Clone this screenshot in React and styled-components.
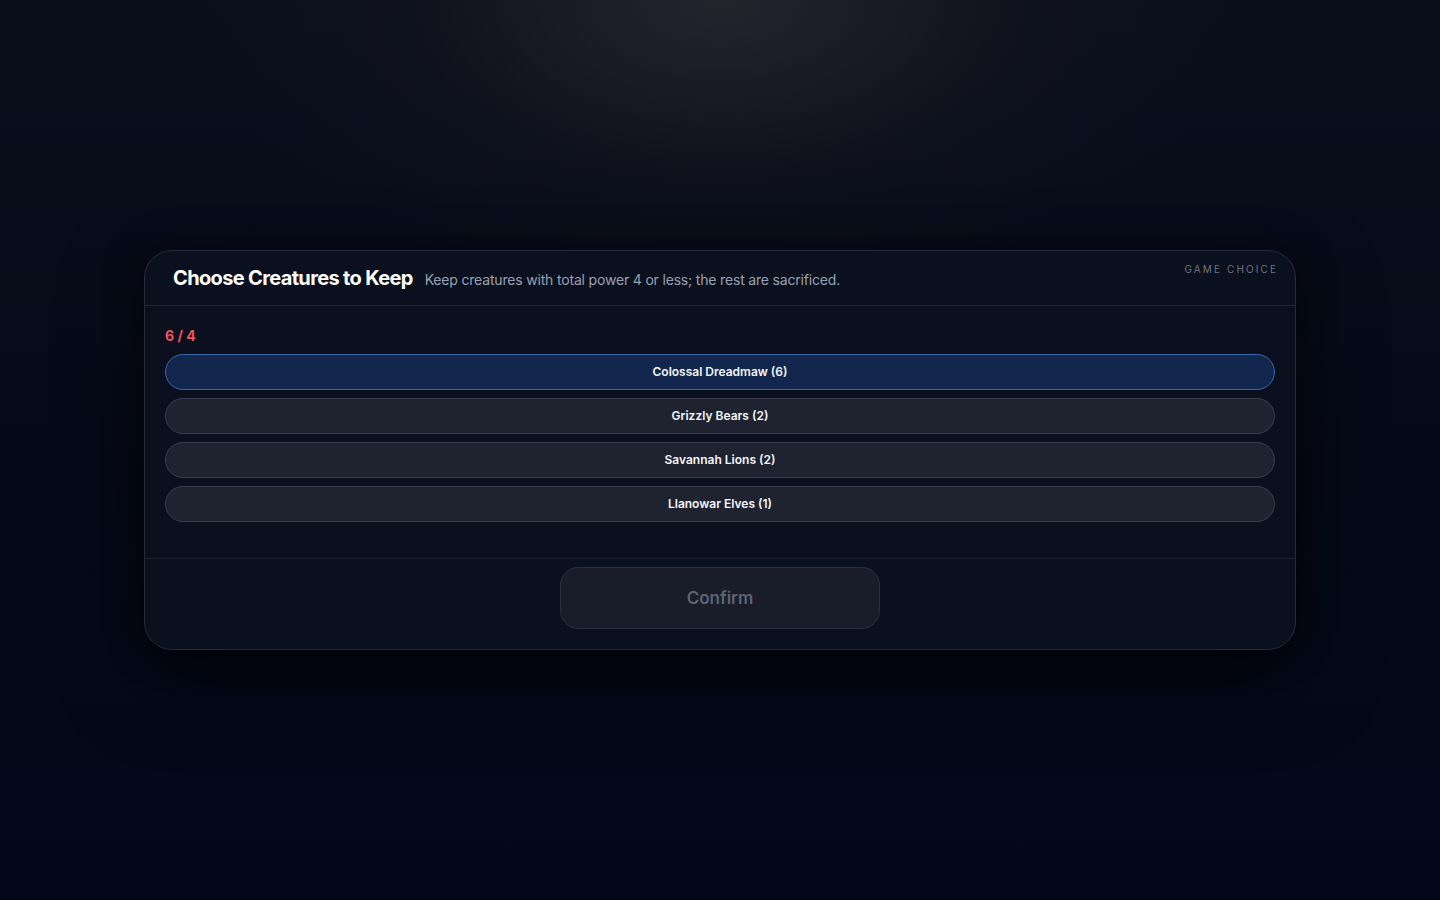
import styled, { createGlobalStyle } from "styled-components";

const GlobalStyle = createGlobalStyle`
  * { box-sizing: border-box; }
  html, body { margin: 0; padding: 0; }
  body {
    font-family: Inter, "Noto Sans", "Liberation Sans", sans-serif;
    background: #040816;
    -webkit-font-smoothing: antialiased;
  }
`;

const Backdrop = styled.div`
  width: 100%;
  min-height: 900px;
  display: flex;
  align-items: center;
  justify-content: center;
  background:
    radial-gradient(ellipse 520px 300px at 50% 0%, rgba(40, 40, 48, 0.85), rgba(20, 22, 32, 0.4) 60%, transparent 100%),
    linear-gradient(180deg, #0b0f1c 0%, #060a18 55%, #03071a 100%);
`;

const Panel = styled.section`
  width: 1152px;
  height: 400px;
  display: flex;
  flex-direction: column;
  position: relative;
  background: #0b101e;
  border: 1px solid #262b3a;
  border-radius: 28px;
  box-shadow: 0 30px 80px rgba(0, 0, 0, 0.6), 0 0 40px rgba(0, 0, 0, 0.35);
`;

const Header = styled.header`
  height: 55px;
  display: flex;
  align-items: center;
  gap: 12px;
  padding: 0 28px;
  border-bottom: 1px solid #222736;
`;

const Title = styled.h2`
  margin: 0;
  font-size: 20px;
  font-weight: 700;
  color: #ffffff;
  letter-spacing: -0.65px;
`;

const Subtitle = styled.p`
  margin: 2px 0 0;
  font-size: 14px;
  letter-spacing: -0.18px;
  color: #98a1b3;
`;

const Tag = styled.span`
  position: absolute;
  top: 12px;
  right: 17px;
  font-size: 10px;
  letter-spacing: 2.1px;
  color: #6a7387;
`;

const Body = styled.div`
  flex: 1;
  display: flex;
  flex-direction: column;
  padding: 20px 20px 0;
`;

const Counter = styled.div`
  font-size: 14px;
  font-weight: 700;
  color: ${(p) => (p.$over ? "#f0525c" : "#8fd19e")};
  line-height: 20px;
  margin-bottom: 8px;
`;

const List = styled.div`
  display: flex;
  flex-direction: column;
  gap: 8px;
`;

const Option = styled.button`
  height: 36px;
  width: 100%;
  padding: 0 0 2px;
  border-radius: 999px;
  font-family: inherit;
  font-size: 12px;
  font-weight: 600;
  color: #f3f5fa;
  cursor: pointer;
  background: ${(p) => (p.$selected ? "#12264e" : "#1f2330")};
  border: 1px solid ${(p) => (p.$selected ? "#3d66a6" : "#3a3e4c")};
`;

const Footer = styled.footer`
  height: 91px;
  display: flex;
  justify-content: center;
  padding-top: 8px;
  border-top: 1px solid #1c2130;
`;

const ConfirmButton = styled.button`
  width: 320px;
  height: 62px;
  padding: 0;
  border-radius: 18px;
  font-family: inherit;
  font-size: 17px;
  font-weight: 600;
  color: #5e6474;
  background: #191d2a;
  border: 1px solid #2a2f3e;
  cursor: not-allowed;
`;

const creatures = [
  { name: "Colossal Dreadmaw", power: 6, selected: true },
  { name: "Grizzly Bears", power: 2 },
  { name: "Savannah Lions", power: 2 },
  { name: "Llanowar Elves", power: 1 },
];

const limit = 4;

export default function App() {
  const total = creatures.filter((c) => c.selected).reduce((s, c) => s + c.power, 0);
  return (
    <>
      <GlobalStyle />
      <Backdrop>
        <Panel>
          <Tag>GAME CHOICE</Tag>
          <Header>
            <Title>Choose Creatures to Keep</Title>
            <Subtitle>Keep creatures with total power 4 or less; the rest are sacrificed.</Subtitle>
          </Header>
          <Body>
            <Counter $over={total > limit}>
              {total} / {limit}
            </Counter>
            <List>
              {creatures.map((c) => (
                <Option key={c.name} $selected={c.selected}>
                  {c.name} ({c.power})
                </Option>
              ))}
            </List>
          </Body>
          <Footer>
            <ConfirmButton disabled>Confirm</ConfirmButton>
          </Footer>
        </Panel>
      </Backdrop>
    </>
  );
}
